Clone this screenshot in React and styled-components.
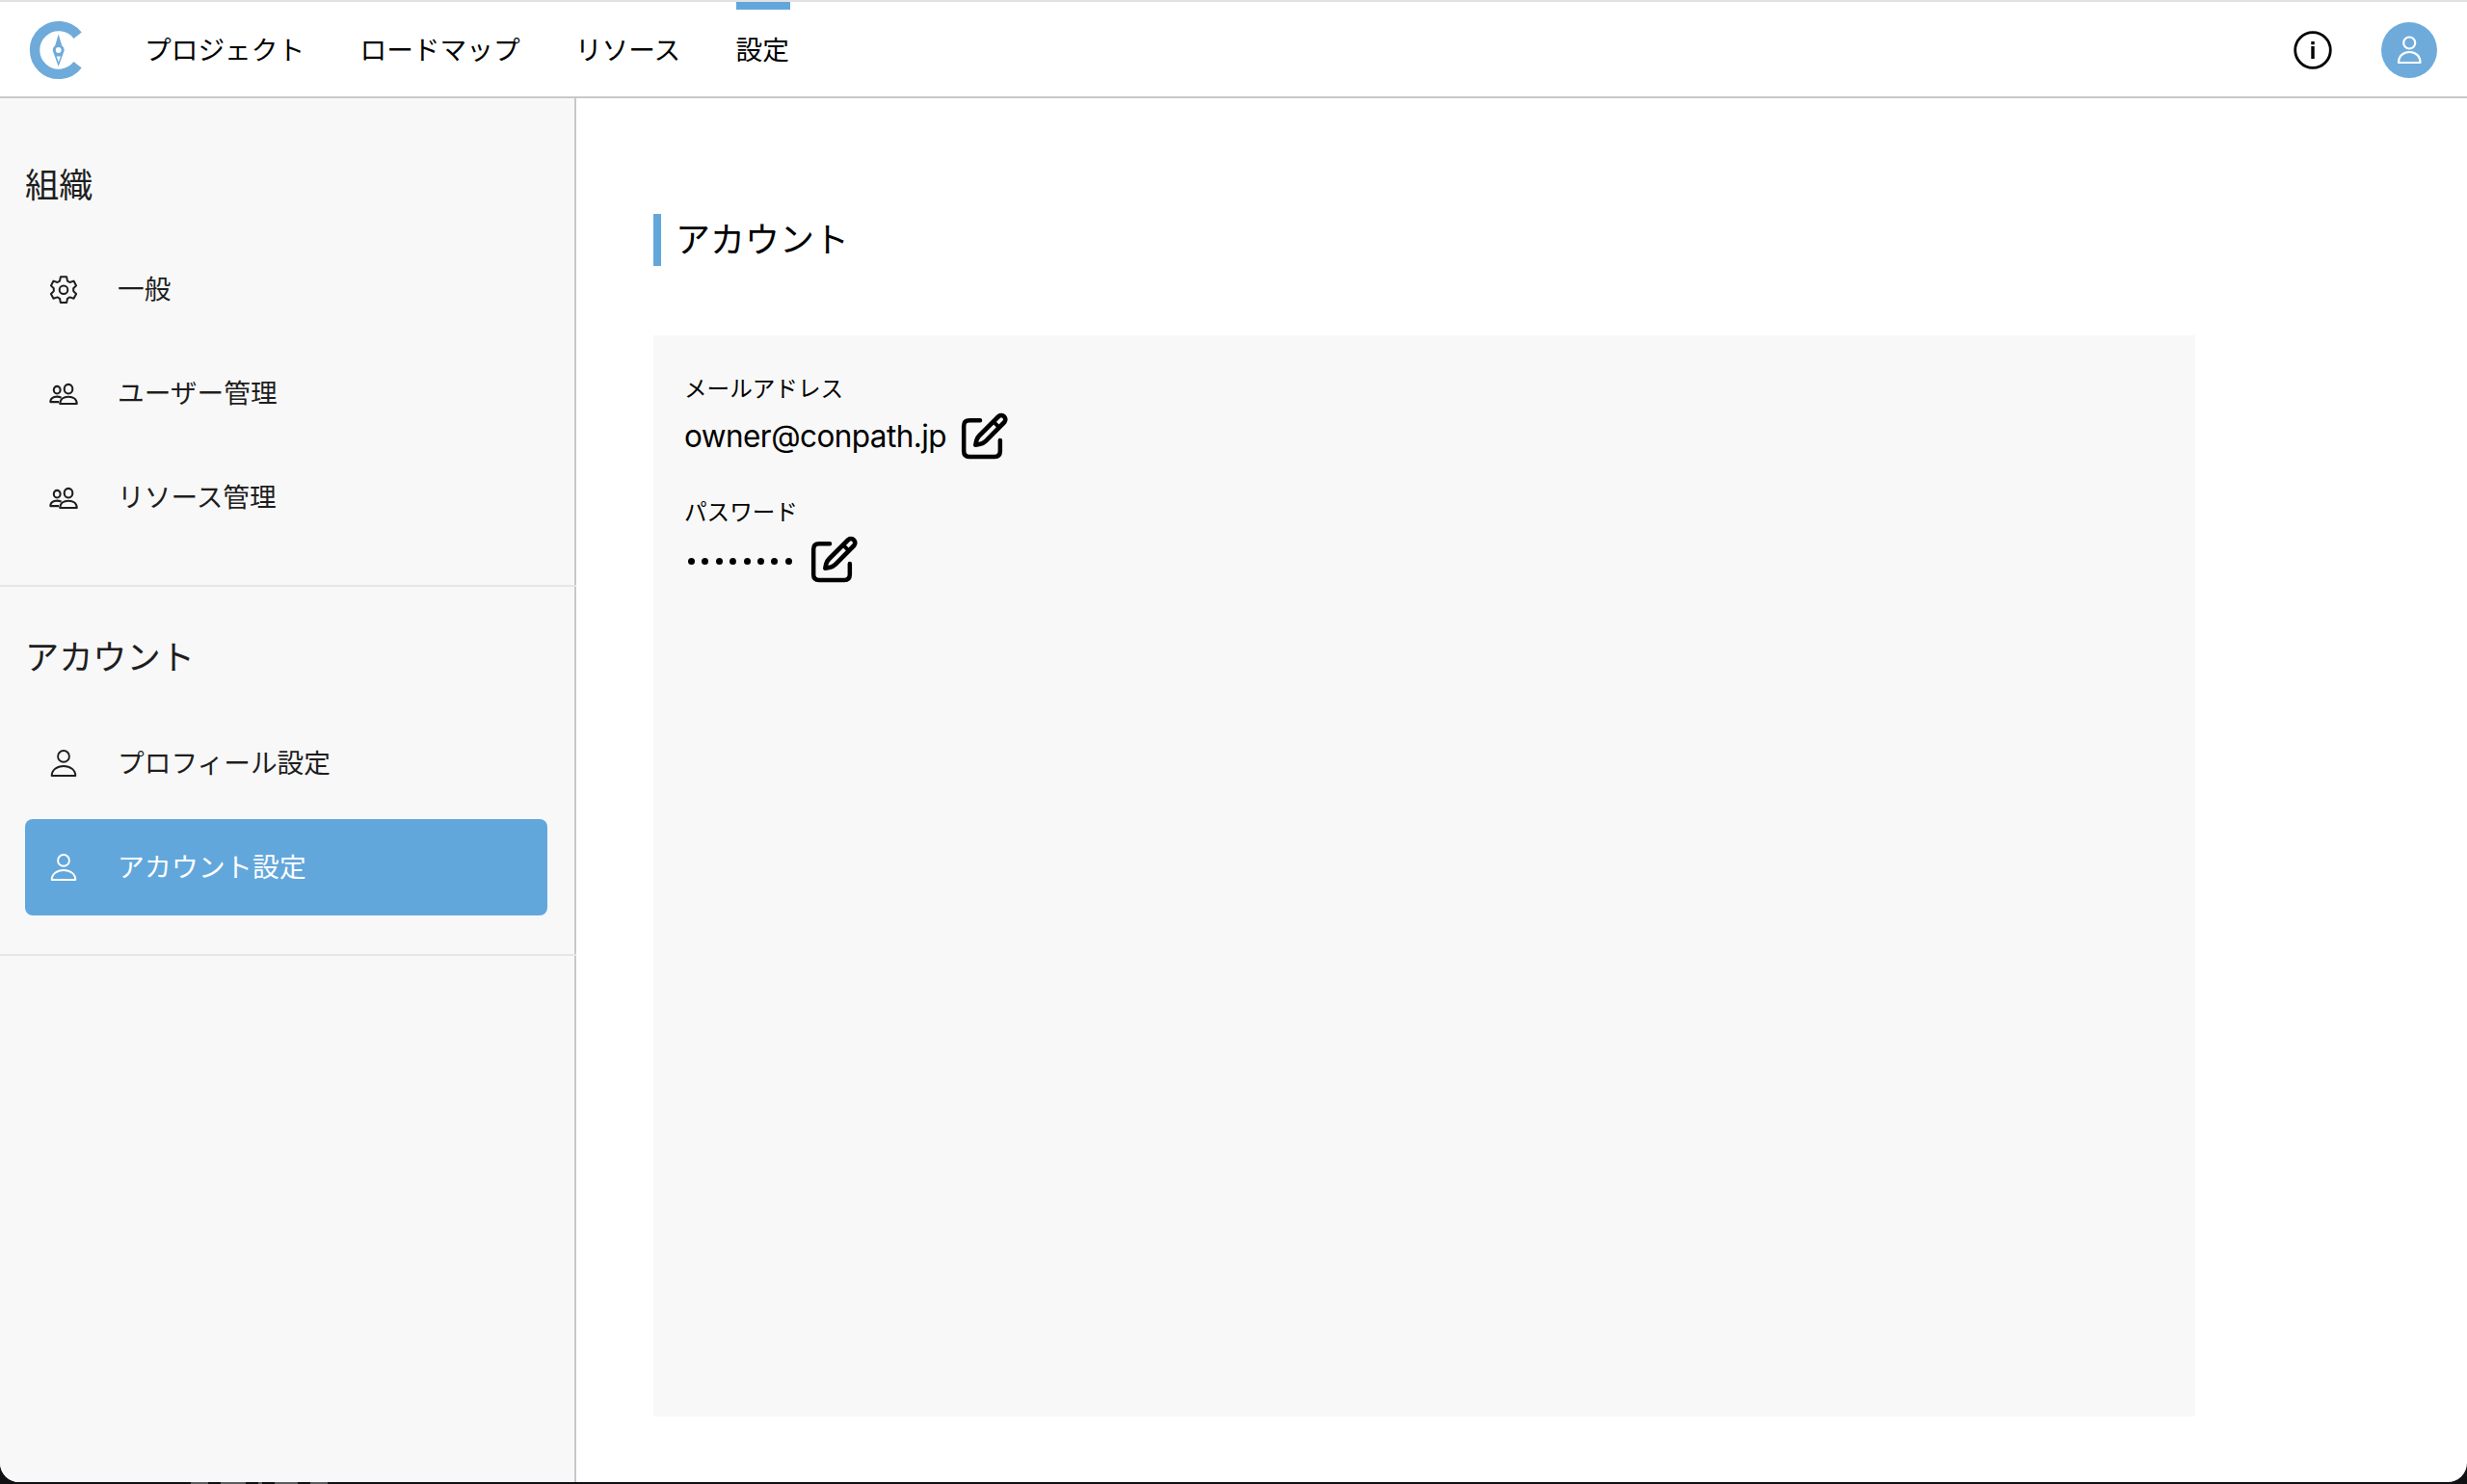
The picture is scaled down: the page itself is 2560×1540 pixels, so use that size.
import React from 'react';
import styled, { createGlobalStyle } from 'styled-components';

const BLUE = '#62a7dc';

const GlobalStyle = createGlobalStyle`
  *, *::before, *::after { box-sizing: border-box; }
  body {
    margin: 0;
    background: #111013;
    font-family: Inter, "Noto Sans CJK JP", sans-serif;
    color: #000;
    overflow: hidden;
  }
  svg { display: block; flex: none; }
  h1, h2, p { margin: 0; font-weight: 400; }
`;

const Desktop = styled.div`
  height: 1540px;
  display: flex;
  flex-direction: column;
  overflow: hidden;
`;

const Window = styled.div`
  height: 1538px;
  flex: none;
  display: flex;
  flex-direction: column;
  background: #fff;
  border-radius: 0 0 20px 20px;
  overflow: hidden;
`;

const Behind = styled.div`
  height: 2px;
  padding-left: 198px;
  display: flex;
  gap: 13px;
`;

const BehindMark = styled.span`
  width: ${(p) => p.$w}px;
  height: 2px;
  background: #5c5b5e;
`;

const Header = styled.header`
  height: 102px;
  flex: none;
  display: flex;
  border-top: 2px solid #e2e2e2;
  border-bottom: 2px solid #c8c8c8;
  padding: 0 31px 0 30px;
`;

const Logo = styled.div`
  width: 120px;
  padding-top: 19px;
`;

const Nav = styled.nav`
  display: flex;
  gap: 57.3px;
`;

const Tab = styled.a`
  min-width: 56px;
  border-top: 8px solid ${(p) => (p.$active ? BLUE : 'transparent')};
  font-size: 27.7px;
  line-height: 40px;
  padding-top: 22px;
  white-space: nowrap;
`;

const Actions = styled.div`
  margin-left: auto;
  display: flex;
  align-items: center;
  gap: 51px;
  padding-top: 2px;
`;

const Avatar = styled.div`
  width: 58px;
  height: 58px;
  border-radius: 50%;
  background: #6eabdb;
  display: flex;
  align-items: center;
  justify-content: center;
`;

const Body = styled.div`
  flex: 1;
  display: flex;
  min-height: 0;
`;

const Sidebar = styled.aside`
  width: 598px;
  flex: none;
  background: linear-gradient(to right, #f8f8f8 596px, #c8c8c8 596px);
  color: #1e1e1e;
`;

const Group = styled.section`
  height: ${(p) => p.$height}px;
  border-bottom: 2px solid #e5e5ea;
  padding: ${(p) => p.$top}px 30px 0 26px;
`;

const GroupTitle = styled.h2`
  height: ${(p) => p.$height}px;
  font-size: 35.2px;
  line-height: 52px;
`;

const Item = styled.a`
  height: 100px;
  margin-bottom: 8px;
  padding-left: 24px;
  display: flex;
  align-items: center;
  border-radius: 8px;
  font-size: 27.7px;
  line-height: 40px;
  letter-spacing: ${(p) => (p.$active ? '0.3px' : 'normal')};
  color: ${(p) => (p.$active ? '#fff' : 'inherit')};
  background: ${(p) => (p.$active ? BLUE : 'transparent')};
`;

const ItemIcon = styled.span`
  width: 32px;
  margin-right: 40px;
`;

const ItemText = styled.span`
  padding-bottom: 1px;
`;

const Main = styled.main`
  flex: 1;
  padding: 120px 282px 0 80px;
`;

const Title = styled.h1`
  height: 54px;
  border-left: 8px solid ${BLUE};
  padding-left: 15px;
  font-size: 36px;
  line-height: 54px;
`;

const Panel = styled.section`
  margin-top: 72px;
  height: 1122px;
  background: #f8f8f8;
  padding: 36px 32px 0;
`;

const Field = styled.div`
  height: 128px;
`;

const Label = styled.p`
  font-size: 23.6px;
  line-height: 40px;
`;

const Value = styled.div`
  display: flex;
  align-items: center;
  height: 56px;
  margin-top: 1px;
`;

const Email = styled.span`
  width: 283px;
  font-size: 31.5px;
  line-height: 54px;
  padding-bottom: 1px;
  letter-spacing: -0.56px;
`;

const Mask = styled.span`
  display: flex;
  gap: 7.4px;
  width: 127px;
  padding: 2px 0 0 4px;
`;

const Dot = styled.i`
  width: 7px;
  height: 7px;
  border-radius: 50%;
  background: #000;
`;

function LogoMark() {
  return (
    <svg width="56" height="62" viewBox="0 0 56 62" fill="none">
      <path d="M50.6 15.7A24.9 24.9 0 1 0 50.6 46.3" stroke="#6eabdb" strokeWidth="10.4" />
      <path d="M30.7 14.5L34.2 26.2A6 6 0 0 1 35.6 34.5L30.7 48L25.8 34.5A6 6 0 0 1 27.2 26.2Z" fill="#6eabdb" />
      <circle cx="30.7" cy="31" r="2.9" fill="#fff" />
      <path d="M28.7 37.6H32.9L30.8 43.6Z" fill="#fff" />
    </svg>
  );
}

function InfoIcon() {
  return (
    <svg width="40" height="40" viewBox="0 0 40 40" fill="none" stroke="#000">
      <circle cx="20" cy="20" r="18.3" strokeWidth="2.8" />
      <path d="M20 16v13M20 11v3.2" strokeWidth="3.4" />
    </svg>
  );
}

function PersonIcon() {
  return (
    <svg width="32" height="32" viewBox="0 0 32 32" fill="none" stroke="currentColor" strokeWidth="1.9" strokeLinejoin="round">
      <circle cx="16" cy="8.9" r="5.9" />
      <path d="M3.7 29C3.7 23 9 19 16 19S28.3 23 28.3 29Z" />
    </svg>
  );
}

function AvatarPerson() {
  return (
    <svg width="28" height="30" viewBox="0 0 28 30" fill="none" stroke="#fff" strokeWidth="2.2" strokeLinejoin="round">
      <circle cx="14.2" cy="7.5" r="6" />
      <path d="M3 28C3 21 8 17 14.3 17S25.5 21 25.5 28Z" />
    </svg>
  );
}

function PeopleIcon() {
  return (
    <svg width="32" height="32" viewBox="0 0 32 32" fill="none" stroke="currentColor" strokeWidth="2.1" strokeLinejoin="round">
      <ellipse cx="21" cy="11.7" rx="4.3" ry="4.8" />
      <path d="M12.3 27C12.3 22.2 16 19.8 21 19.8S29.7 22.2 29.7 27Z" />
      <ellipse cx="9.2" cy="12.7" rx="3.4" ry="3.8" />
      <path d="M13.6 20.6C9 18.6 2.4 19.8 2.3 25.1H11" />
    </svg>
  );
}

function GearIcon() {
  return (
    <svg width="32" height="32" viewBox="0 -0.7 32 32" fill="none" stroke="currentColor" strokeWidth="2" strokeLinejoin="round">
      <circle cx="16" cy="16" r="4.3" />
      <path d="M12.9 2.6h6.2l.9 4.3 2.4 1.4 4.1-1.4 2.6 4.8-2.9 2.9v2.8l2.9 2.9-2.6 4.8-4.1-1.4-2.4 1.4-.9 4.3h-6.2l-.9-4.3-2.4-1.4-4.1 1.4-2.6-4.8 2.9-2.9v-2.8l-2.9-2.9 2.6-4.8 4.1 1.4 2.4-1.4z" />
    </svg>
  );
}

function EditIcon() {
  return (
    <svg width="56" height="56" viewBox="9 15 168 168" fill="none" stroke="#000" strokeLinecap="round" strokeLinejoin="round">
      <path strokeWidth="13.5" d="M81 49H48Q30.5 49 30.5 66V145Q30.5 162 48 162H126Q143.5 162 143.5 145V111" />
      <path strokeWidth="14" d="M139 36L79 96Q72 103 70 111L67 125L82 122Q92 120 99 113L157 54A12.8 12.8 0 0 0 139 36Z" />
      <path strokeWidth="12" d="M123 53L140 70" />
    </svg>
  );
}

function NavItem({ icon, active, children }) {
  return (
    <Item $active={active}>
      <ItemIcon>{icon}</ItemIcon>
      <ItemText>{children}</ItemText>
    </Item>
  );
}

export default function App() {
  return (
    <Desktop>
      <GlobalStyle />
      <Window>
        <Header>
          <Logo><LogoMark /></Logo>
          <Nav>
            <Tab>プロジェクト</Tab>
            <Tab>ロードマップ</Tab>
            <Tab>リソース</Tab>
            <Tab $active>設定</Tab>
          </Nav>
          <Actions>
            <InfoIcon />
            <Avatar><AvatarPerson /></Avatar>
          </Actions>
        </Header>
        <Body>
          <Sidebar>
            <Group $height={507} $top={64}>
              <GroupTitle $height={84}>組織</GroupTitle>
              <NavItem icon={<GearIcon />}>一般</NavItem>
              <NavItem icon={<PeopleIcon />}>ユーザー管理</NavItem>
              <NavItem icon={<PeopleIcon />}>リソース管理</NavItem>
            </Group>
            <Group $height={383} $top={47}>
              <GroupTitle $height={86}>アカウント</GroupTitle>
              <NavItem icon={<PersonIcon />}>プロフィール設定</NavItem>
              <NavItem icon={<PersonIcon />} active>アカウント設定</NavItem>
            </Group>
          </Sidebar>
          <Main>
            <Title>アカウント</Title>
            <Panel>
              <Field>
                <Label>メールアドレス</Label>
                <Value>
                  <Email>owner@conpath.jp</Email>
                  <EditIcon />
                </Value>
              </Field>
              <Field>
                <Label>パスワード</Label>
                <Value>
                  <Mask>{Array.from({ length: 8 }, (_, i) => <Dot key={i} />)}</Mask>
                  <EditIcon />
                </Value>
              </Field>
            </Panel>
          </Main>
        </Body>
      </Window>
      <Behind>
        <BehindMark $w={18} />
        <BehindMark $w={26} />
        <BehindMark $w={4} />
        <BehindMark $w={24} />
        <BehindMark $w={18} />
      </Behind>
    </Desktop>
  );
}
